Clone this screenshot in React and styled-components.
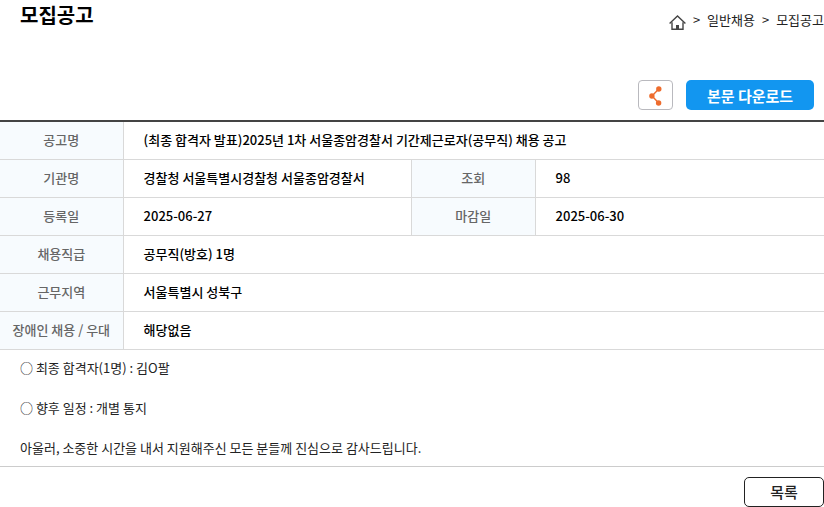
import React from "react";
import styled, { createGlobalStyle } from "styled-components";

const rows = [
    [{label: "공고명", value: "(최종 합격자 발표)2025년 1차 서울종암경찰서 기간제근로자(공무직) 채용 공고"}],
    [{label: "기관명", value: "경찰청 서울특별시경찰청 서울종암경찰서"}, {label: "조회", value: "98"}],
    [{label: "등록일", value: "2025-06-27"}, {label: "마감일", value: "2025-06-30"}],
    [{label: "채용직급", value: "공무직(방호) 1명"}],
    [{label: "근무지역", value: "서울특별시 성북구"}],
    [{label: "장애인 채용 / 우대", value: "해당없음"}],
];

function App(){
    return(
        <Page>
            <GlobalStyle />
            <Header>
                <Title>모집공고</Title>
                <Breadcrumb>
                    <HomeLink href="#" aria-label="홈">
                        <HomeIcon />
                    </HomeLink>
                    <span>&gt;</span>
                    <CrumbLink href="#">일반채용</CrumbLink>
                    <span>&gt;</span>
                    <CrumbLink href="#">모집공고</CrumbLink>
                </Breadcrumb>
            </Header>
            <Toolbar>
                <ShareButton type="button" aria-label="공유">
                    <ShareIcon />
                </ShareButton>
                <DownloadButton type="button">본문 다운로드</DownloadButton>
            </Toolbar>
            <InfoTable>
                <colgroup>
                    <Col $width="15%" />
                    <Col $width="35%" />
                    <Col $width="15%" />
                    <Col $width="35%" />
                </colgroup>
                <tbody>
                    {rows.map((cells) => (
                        <tr key={cells[0].label}>
                            {cells.map((cell) => (
                                <React.Fragment key={cell.label}>
                                    <LabelCell scope="row">{cell.label}</LabelCell>
                                    <ValueCell colSpan={cells.length === 1 ? 3 : 1}>{cell.value}</ValueCell>
                                </React.Fragment>
                            ))}
                        </tr>
                    ))}
                </tbody>
            </InfoTable>
            <Content>
                <p>○ 최종 합격자(1명) : 김O팔</p>
                <p>○ 향후 일정 : 개별 통지</p>
                <p>아울러, 소중한 시간을 내서 지원해주신 모든 분들께 진심으로 감사드립니다.</p>
            </Content>
            <Footer>
                <ListButton href="#">목록</ListButton>
            </Footer>
        </Page>
    )
}

function HomeIcon(){
    return(
        <svg width="17" height="15" viewBox="0 0 17 15" fill="none" stroke="#444" strokeWidth="1.4">
            <path d="M0.6 8.6 L8.5 1 L16.4 8.6" />
            <path d="M3 7.2 V14.3 H14 V7.2" />
            <path d="M7 10 H10 V14 H7 Z" fill="#444" stroke="none" />
        </svg>
    )
}

function ShareIcon(){
    return(
        <svg width="13" height="20" viewBox="0 0 13 20" fill="#ee6c2d">
            <path d="M9.5 3.2 L3 10 L9.5 16.8" fill="none" stroke="#ee6c2d" strokeWidth="1.4" />
            <circle cx="9.8" cy="3" r="2.7" />
            <circle cx="2.9" cy="10" r="2.7" />
            <circle cx="9.6" cy="17" r="2.7" />
        </svg>
    )
}

const GlobalStyle = createGlobalStyle`
    * {
        box-sizing: border-box;
    }
    body {
        margin: 0;
        background: #fff;
        color: #222;
        font-family: "Noto Sans CJK KR", "Noto Sans", sans-serif;
        font-size: 13px;
        line-height: 20px;
    }
    button {
        font-family: inherit;
        cursor: pointer;
    }
    a {
        color: inherit;
        text-decoration: none;
    }
    p {
        margin: 0;
    }
`;

const Page = styled.div`
    width: 100%;
`;

const Header = styled.header`
    display: flex;
    justify-content: space-between;
    align-items: flex-start;
    height: 80px;
    padding-left: 20px;
`;

const Title = styled.h1`
    margin: 0;
    color: #000;
    font-size: 20px;
    font-weight: 700;
    line-height: 30px;
`;

const Breadcrumb = styled.nav`
    display: flex;
    align-items: center;
    gap: 7px;
    padding-top: 10px;
`;

const HomeLink = styled.a`
    display: flex;
    padding-top: 4px;
`;

const CrumbLink = styled.a`
    white-space: nowrap;
`;

const Toolbar = styled.div`
    display: flex;
    justify-content: flex-end;
    gap: 13px;
    padding: 0 10px 10px 0;
`;

const ShareButton = styled.button`
    display: flex;
    align-items: center;
    justify-content: center;
    width: 35px;
    height: 30px;
    padding: 2px 0 0;
    background: #fff;
    border: 1px solid #b9b9be;
    border-radius: 4px;
`;

const DownloadButton = styled.button`
    width: 128px;
    height: 30px;
    padding: 0;
    background: #1296f0;
    border: 0;
    border-radius: 5px;
    color: #fff;
    font-size: 15px;
    font-weight: 700;
`;

const InfoTable = styled.table`
    width: 100%;
    table-layout: fixed;
    border-spacing: 0;
    border-top: 2px solid #444;
`;

const Col = styled.col`
    width: ${props => props.$width};
`;

const LabelCell = styled.th`
    height: 38px;
    padding: 0 0 1px;
    background: #f7fbfe;
    border-right: 1px solid #d9d9d9;
    border-bottom: 1px solid #d9d9d9;
    color: #666;
    font-weight: 500;
    text-align: center;
`;

const ValueCell = styled.td`
    height: 38px;
    padding: 0 20px 1px;
    border-bottom: 1px solid #d9d9d9;
    color: #000;
    font-weight: 500;

    &:not(:last-child) {
        border-right: 1px solid #d9d9d9;
    }
`;

const Content = styled.section`
    display: flex;
    flex-direction: column;
    gap: 20px;
    padding: 8px 20px;
    border-bottom: 1px solid #ccc;
`;

const Footer = styled.div`
    display: flex;
    justify-content: flex-end;
    padding-top: 10px;
`;

const ListButton = styled.a`
    width: 80px;
    height: 30px;
    border: 1px solid #222;
    border-radius: 5px;
    font-size: 15px;
    font-weight: 500;
    line-height: 28px;
    text-align: center;
`;

export default App;
